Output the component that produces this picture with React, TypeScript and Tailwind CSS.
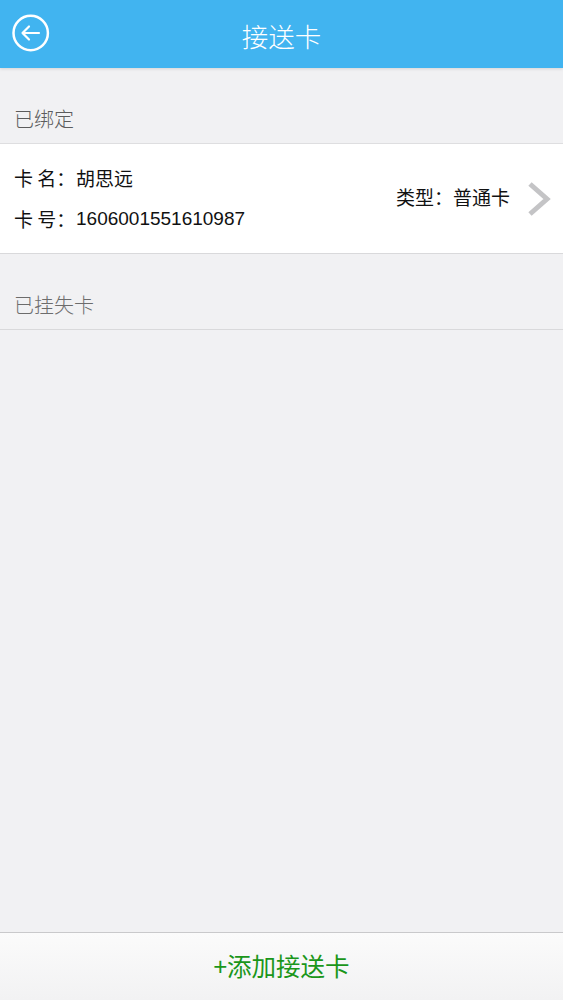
export default function App() {
  const font = { fontFamily: '"Noto Sans CJK SC", sans-serif' };
  return (
    <div className="w-[563px] h-[1000px] flex flex-col bg-[#f1f1f3] overflow-hidden" style={font}>
      <header className="relative h-[68px] shrink-0 bg-[#41b4f0] shadow-[0_1px_3px_rgba(0,0,0,0.12)] flex items-center justify-center">
        <span className="text-white text-[26.5px] leading-none font-light pt-[5px]">接送卡</span>
        <svg className="absolute left-[12px] top-[14px]" width="38" height="38" viewBox="0 0 38 38" fill="none" stroke="white">
          <circle cx="18.7" cy="19" r="17.2" strokeWidth="2.5" />
          <path d="M27 19H10.5M17 12.5L10.5 19L17 25.5" strokeWidth="2.2" strokeLinecap="round" strokeLinejoin="round" />
        </svg>
      </header>
      <div className="h-[76px] shrink-0 flex items-end pl-[14px] pb-[11px] border-b border-[#dedee0]">
        <span className="text-[20px] leading-[26px] font-light text-[#5c5c5c]">已绑定</span>
      </div>
      <div className="h-[110px] shrink-0 bg-white border-b border-[#d9d9db] flex items-center pl-[14px] pr-[12px]">
        <div className="flex-1 flex flex-col gap-[15px] pb-[1px] text-[19px] leading-[26px] text-[#111]">
          <div className="flex"><span className="w-[62px] whitespace-pre">卡 名：</span><span>胡思远</span></div>
          <div className="flex"><span className="w-[62px] whitespace-pre">卡 号：</span><span style={{ fontFamily: '"Liberation Sans", sans-serif' }}>1606001551610987</span></div>
        </div>
        <span className="text-[19px] leading-[26px] pb-[3px] text-[#111] mr-[17px]">类型：普通卡</span>
        <svg width="24" height="36" viewBox="0 0 24 36" fill="none" stroke="#c4c4c6" strokeWidth="5">
          <path d="M3 3L20 18L3 33" />
        </svg>
      </div>
      <div className="h-[76px] shrink-0 flex items-end pl-[14px] pb-[11px] border-b border-[#d9d9db]">
        <span className="text-[20px] leading-[26px] font-light text-[#6c6c6c]">已挂失卡</span>
      </div>
      <div className="flex-1" />
      <footer className="h-[68px] shrink-0 border-t border-[#c9c9cb] bg-gradient-to-b from-[#fbfbfb] to-[#f2f2f3] flex items-center justify-center">
        <span className="text-[24.5px] leading-none text-[#1a961a]">+添加接送卡</span>
      </footer>
    </div>
  );
}
